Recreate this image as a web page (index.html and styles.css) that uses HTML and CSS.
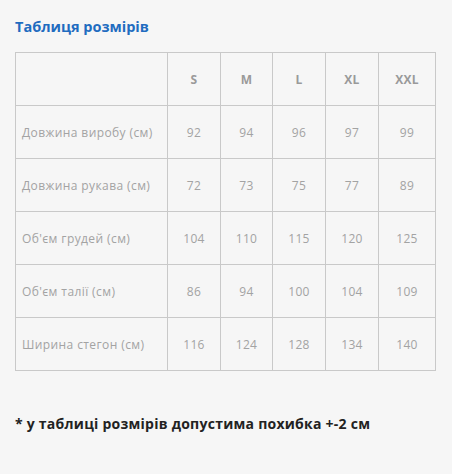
FILE: index.html
```html
<!DOCTYPE html>
<html lang="uk">
<head>
<meta charset="utf-8">
<link rel="stylesheet" href="styles.css">
</head>
<body>
<div class="page">
  <h2 class="title">Таблиця розмірів</h2>
  <table class="sizes">
    <colgroup>
      <col class="c0"><col class="c1"><col class="c2"><col class="c3"><col class="c4"><col class="c5">
    </colgroup>
    <thead>
      <tr><th></th><th>S</th><th>M</th><th>L</th><th>XL</th><th>XXL</th></tr>
    </thead>
    <tbody>
      <tr><td class="label">Довжина виробу (см)</td><td>92</td><td>94</td><td>96</td><td>97</td><td>99</td></tr>
      <tr><td class="label">Довжина рукава (см)</td><td>72</td><td>73</td><td>75</td><td>77</td><td>89</td></tr>
      <tr><td class="label">Об'єм грудей (см)</td><td>104</td><td>110</td><td>115</td><td>120</td><td>125</td></tr>
      <tr><td class="label">Об'єм талії (см)</td><td>86</td><td>94</td><td>100</td><td>104</td><td>109</td></tr>
      <tr><td class="label">Ширина стегон (см)</td><td>116</td><td>124</td><td>128</td><td>134</td><td>140</td></tr>
    </tbody>
  </table>
  <p class="note">* у таблиці розмірів допустима похибка +-2 см</p>
</div>
</body>
</html>
```
FILE: styles.css
```css
html, body {
  margin: 0;
  padding: 0;
  background: #f6f6f6;
}
.page {
  padding: 17px 15px 0 15px;
  font-family: "Open Sans", "DejaVu Sans", sans-serif;
}
.title {
  margin: 0 0 15px 0;
  font-size: 14.5px;
  line-height: 20px;
  font-weight: 700;
  color: #1f6cc0;
}
.sizes {
  border-collapse: collapse;
  table-layout: fixed;
  width: 421px;
}
.c0 { width: 152px; }
.c1 { width: 53px; }
.c2 { width: 52px; }
.c3 { width: 53px; }
.c4 { width: 53px; }
.c5 { width: 57px; }
.sizes th, .sizes td {
  border: 1px solid #c9c9c9;
  height: 52px;
  padding: 0;
  text-align: center;
  vertical-align: middle;
  font-size: 12px;
  letter-spacing: 0.3px;
  color: #a3a3a3;
}
.sizes th {
  font-weight: 700;
  color: #9a9a9a;
}
.sizes td.label {
  text-align: left;
  padding-left: 6px;
  font-size: 12px;
  letter-spacing: 0.4px;
}
.note {
  margin: 43px 0 0 0;
  font-size: 14px;
  letter-spacing: 0.25px;
  line-height: 20px;
  font-weight: 700;
  color: #222;
}
```
